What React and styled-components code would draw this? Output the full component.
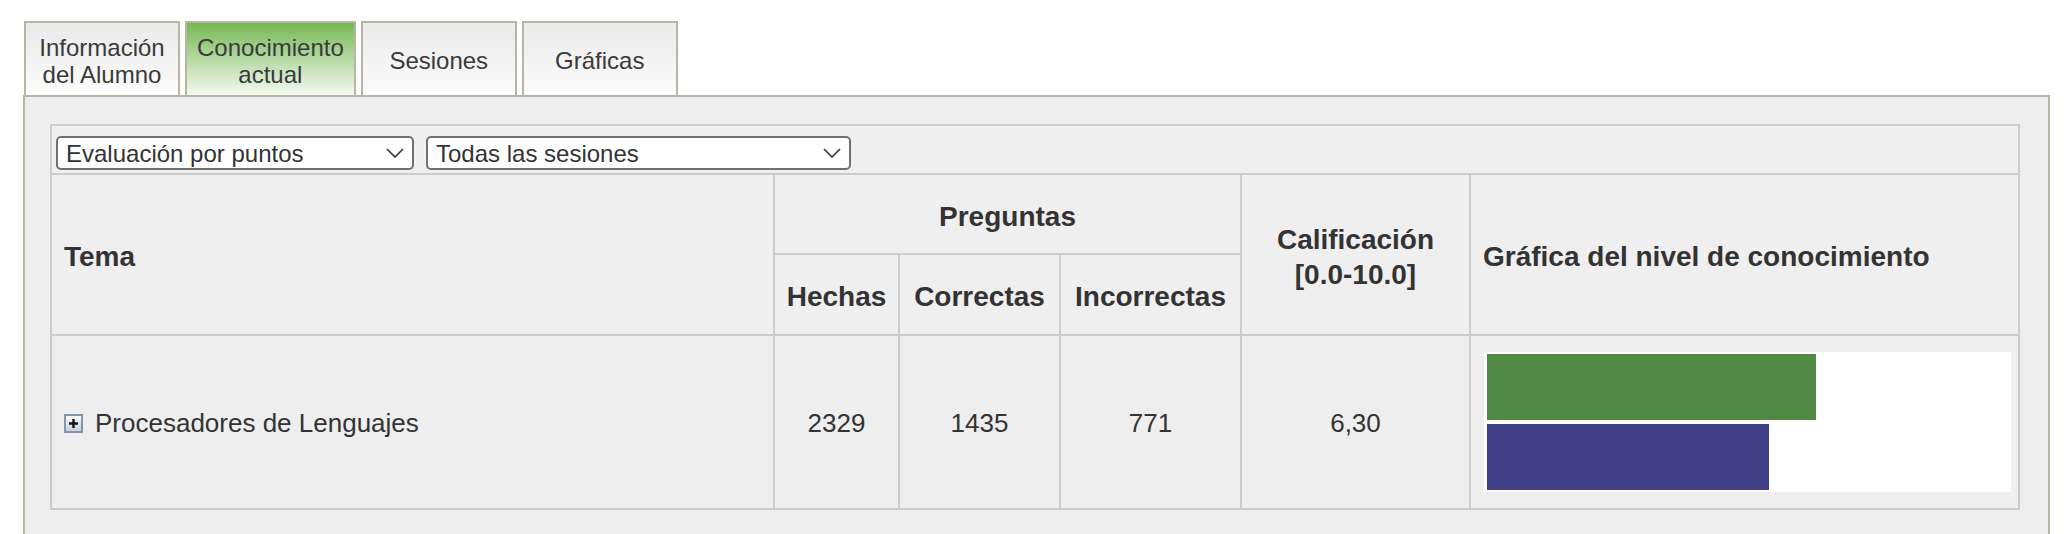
import React from 'react';
import styled, { createGlobalStyle } from 'styled-components';

const Global = createGlobalStyle`
  html, body { margin: 0; padding: 0; background: #ffffff; overflow: hidden; }
  body { font-family: "Liberation Sans", Arial, Helvetica, sans-serif; color: #333333; }
`;

const Page = styled.div`
  padding: 21px 18px 0 23px;
`;

const TabBar = styled.div`
  display: flex;
  gap: 5px;
  padding-left: 1px;
  height: 74px;
`;

const Tab = styled.div`
  box-sizing: border-box;
  min-width: 156px;
  height: 74px;
  padding: 3px 10px 0;
  border: 2px solid #b8b5a5;
  border-bottom: none;
  background: ${p => (p.$active ? 'linear-gradient(#76b853, #f4faf1)' : 'linear-gradient(#eaeaea, #fcfcfc)')};
  display: flex;
  align-items: center;
  justify-content: center;
  text-align: center;
  font-size: 24px;
  line-height: 27px;
  color: #3a3a3a;
  cursor: pointer;
`;

const Panel = styled.div`
  box-sizing: border-box;
  border: 2px solid #b8b5a5;
  background: #eeeeee;
  padding: 27px 28px 40px 25px;
`;

const Grid = styled.div`
  display: grid;
  grid-template-columns: 721px 123px 159px 179px 227px 547px;
  grid-template-rows: 47px 78px 79px 172px;
  gap: 2px;
  border: 2px solid #cccccc;
  background: #cccccc;
  width: max-content;
`;

const Cell = styled.div`
  grid-column: ${p => p.$col};
  grid-row: ${p => p.$row};
  box-sizing: border-box;
  background: ${p => (p.$body ? '#eeeeee' : '#efefef')};
  display: flex;
  align-items: center;
  justify-content: ${p => (p.$center ? 'center' : 'flex-start')};
  text-align: ${p => (p.$center ? 'center' : 'left')};
  padding: ${p => (p.$body ? '2px 12px 0' : '4px 12px 0')};
  font-size: ${p => (p.$body ? '26px' : '28px')};
  font-weight: ${p => (p.$body ? 400 : 700)};
  line-height: ${p => (p.$body ? '30px' : '35px')};
  color: #333333;
`;

const ToolbarCell = styled.div`
  grid-column: 1 / -1;
  grid-row: 1;
  background: #efefef;
  display: flex;
  align-items: flex-start;
  gap: 12px;
  padding: 10px 4px 0;
`;

const SelectWrap = styled.div`
  position: relative;
  width: ${p => p.$width}px;
  height: 34px;
`;

const NativeSelect = styled.select`
  appearance: none;
  -webkit-appearance: none;
  box-sizing: border-box;
  width: 100%;
  height: 34px;
  margin: 0;
  padding: 0 36px 0 8px;
  border: 2px solid #707070;
  border-radius: 5px;
  background: #ffffff;
  font-family: "Liberation Sans", Arial, Helvetica, sans-serif;
  font-size: 24px;
  color: #333333;
  outline: none;
`;

const Chevron = styled.svg`
  position: absolute;
  right: 10px;
  top: 12px;
  pointer-events: none;
`;

const TopicCell = styled(Cell)`
  gap: 12px;
`;

const ChartCell = styled(Cell)`
  padding: 0 0 0 13px;
`;

const ChartBox = styled.div`
  box-sizing: border-box;
  width: 527px;
  height: 140px;
  background: #ffffff;
  padding: 2px 2px 2px 2.5px;
  display: flex;
  flex-direction: column;
  gap: 4px;
`;

const Bar = styled.div`
  height: 66px;
  background: ${p => p.$color};
`;

function Select({ width, value, options }) {
  return (
    <SelectWrap $width={width}>
      <NativeSelect defaultValue={value}>
        {options.map(o => (
          <option key={o}>{o}</option>
        ))}
      </NativeSelect>
      <Chevron width="18" height="10" viewBox="0 0 18 10">
        <polyline points="1,1 9,9 17,1" fill="none" stroke="#333" strokeWidth="1.6" />
      </Chevron>
    </SelectWrap>
  );
}

function PlusIcon() {
  return (
    <svg width="19" height="19" viewBox="0 0 19 19">
      <defs>
        <linearGradient id="plusg" x1="0" y1="0" x2="0" y2="1">
          <stop offset="0" stopColor="#ffffff" />
          <stop offset="1" stopColor="#c5ccd6" />
        </linearGradient>
      </defs>
      <rect x="1" y="1" width="17" height="17" fill="url(#plusg)" stroke="#8494aa" strokeWidth="2" />
      <path d="M5 9.5h9M9.5 5v9" stroke="#111" strokeWidth="2.4" />
    </svg>
  );
}

const tabs = [
  { label: ['Información', 'del Alumno'] },
  { label: ['Conocimiento', 'actual'], active: true },
  { label: ['Sesiones'] },
  { label: ['Gráficas'] },
];

const row = { tema: 'Procesadores de Lenguajes', hechas: 2329, correctas: 1435, incorrectas: 771, nota: 6.3, nivel: 54 };

export default function App() {
  return (
    <>
      <Global />
      <Page>
        <TabBar>
          {tabs.map((t, i) => (
            <Tab key={i} $active={t.active}>
              <span>
                {t.label.map((l, j) => (
                  <React.Fragment key={j}>
                    {j > 0 && <br />}
                    {l}
                  </React.Fragment>
                ))}
              </span>
            </Tab>
          ))}
        </TabBar>
        <Panel>
          <Grid>
            <ToolbarCell>
              <Select width={358} value="Evaluación por puntos" options={['Evaluación por puntos', 'Evaluación por porcentaje']} />
              <Select width={425} value="Todas las sesiones" options={['Todas las sesiones', 'Última sesión']} />
            </ToolbarCell>

            <Cell $col="1" $row="2 / 4">Tema</Cell>
            <Cell $col="2 / 5" $row="2" $center>Preguntas</Cell>
            <Cell $col="5" $row="2 / 4" $center>
              Calificación
              <br />
              [0.0-10.0]
            </Cell>
            <Cell $col="6" $row="2 / 4">Gráfica del nivel de conocimiento</Cell>
            <Cell $col="2" $row="3" $center>Hechas</Cell>
            <Cell $col="3" $row="3" $center>Correctas</Cell>
            <Cell $col="4" $row="3" $center>Incorrectas</Cell>

            <TopicCell $col="1" $row="4" $body>
              <PlusIcon />
              {row.tema}
            </TopicCell>
            <Cell $col="2" $row="4" $body $center>{row.hechas}</Cell>
            <Cell $col="3" $row="4" $body $center>{row.correctas}</Cell>
            <Cell $col="4" $row="4" $body $center>{row.incorrectas}</Cell>
            <Cell $col="5" $row="4" $body $center>{row.nota.toFixed(2).replace('.', ',')}</Cell>
            <ChartCell $col="6" $row="4" $body>
              <ChartBox>
                <Bar $color="#518945" style={{ width: `${row.nota * 10}%` }} />
                <Bar $color="#403f86" style={{ width: `${row.nivel}%` }} />
              </ChartBox>
            </ChartCell>
          </Grid>
        </Panel>
      </Page>
    </>
  );
}
